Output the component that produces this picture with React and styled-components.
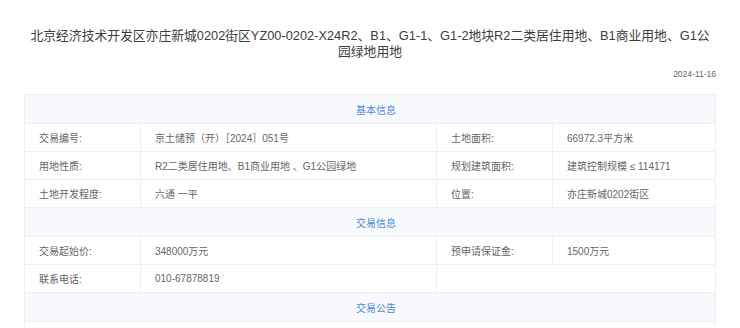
import React from 'react';
import styled, { createGlobalStyle } from 'styled-components';

const GlobalStyle = createGlobalStyle`
  html, body {
    margin: 0;
    padding: 0;
    background: #fff;
    overflow: hidden;
    font-family: "Liberation Sans", "Noto Sans CJK SC", sans-serif;
  }
`;

const Page = styled.div`
  padding: 28px 24px 0 24px;
`;

const Title = styled.h1`
  margin: 0;
  padding: 0 4px;
  font-size: 12.8px;
  line-height: 16px;
  font-weight: normal;
  color: #3c3c3c;
  text-align: center;
`;

const DateText = styled.div`
  margin-top: 8px;
  font-size: 8.5px;
  line-height: 12px;
  color: #666;
  text-align: right;
`;

const Table = styled.table`
  margin-top: 14px;
  width: 100%;
  border-collapse: collapse;
  table-layout: fixed;
  border: 1px solid #eef0f4;
  font-size: 10px;
  color: #666;
`;

const SectionCell = styled.td`
  height: 28px;
  padding: 0 0 0 12px;
  background: #f7f9fc;
  color: #4a8ad6;
  text-align: center;
  border: 1px solid #eef0f4;
`;

const Cell = styled.td`
  height: 27px;
  padding: 0 14px;
  border: 1px solid #eef0f4;
  white-space: nowrap;
  ${p => p.$tall && 'height: 80px; vertical-align: top;'}
`;

const Section = ({ children }) => (
  <tr>
    <SectionCell colSpan={4}>{children}</SectionCell>
  </tr>
);

export default function App() {
  return (
    <>
      <GlobalStyle />
      <Page>
        <Title>
          北京经济技术开发区亦庄新城0202街区YZ00-0202-X24R2、B1、G1-1、G1-2地块R2二类居住用地、B1商业用地、G1公园绿地用地
        </Title>
        <DateText>2024-11-16</DateText>
        <Table>
          <colgroup>
            <col style={{ width: 116 }} />
            <col style={{ width: 296 }} />
            <col style={{ width: 116 }} />
            <col />
          </colgroup>
          <tbody>
            <Section>基本信息</Section>
            <tr>
              <Cell>交易编号:</Cell>
              <Cell>京土储预（开）［2024］051号</Cell>
              <Cell>土地面积:</Cell>
              <Cell>66972.3平方米</Cell>
            </tr>
            <tr>
              <Cell>用地性质:</Cell>
              <Cell>R2二类居住用地、B1商业用地 、G1公园绿地</Cell>
              <Cell>规划建筑面积:</Cell>
              <Cell>建筑控制规模 ≤ 114171</Cell>
            </tr>
            <tr>
              <Cell>土地开发程度:</Cell>
              <Cell>六通 一平</Cell>
              <Cell>位置:</Cell>
              <Cell>亦庄新城0202街区</Cell>
            </tr>
            <Section>交易信息</Section>
            <tr>
              <Cell>交易起始价:</Cell>
              <Cell>348000万元</Cell>
              <Cell>预申请保证金:</Cell>
              <Cell>1500万元</Cell>
            </tr>
            <tr>
              <Cell>联系电话:</Cell>
              <Cell>010-67878819</Cell>
              <Cell colSpan={2}></Cell>
            </tr>
            <Section>交易公告</Section>
            <tr>
              <Cell colSpan={4} $tall></Cell>
            </tr>
          </tbody>
        </Table>
      </Page>
    </>
  );
}
